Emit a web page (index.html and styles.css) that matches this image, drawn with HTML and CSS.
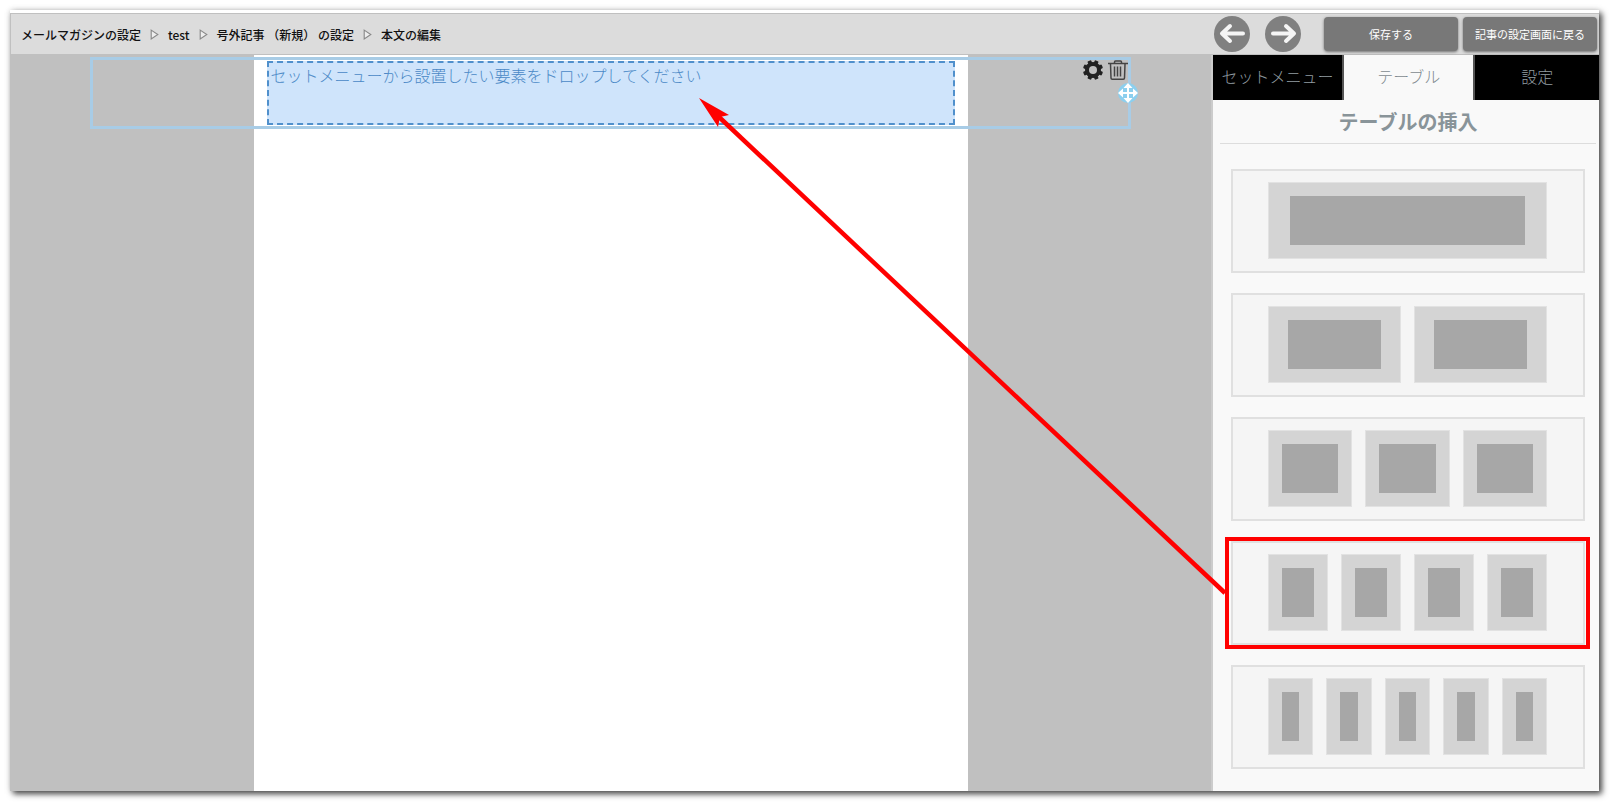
FILE: index.html
```html
<!DOCTYPE html>
<html lang="ja">
<head>
    <meta charset="UTF-8">
    <meta name="viewport" content="width=device-width, initial-scale=1.0">
    <title>本文の編集</title>
    <link rel="stylesheet" href="styles.css">
</head>
<body>

    <div class="app">

        <!-- Toolbar -->
        <header class="toolbar">
            <nav class="breadcrumb">
                <a href="#">メールマガジンの設定</a>
                <svg class="separator" viewBox="0 0 8 10"><path d="M1 1 L7 5 L1 9 Z"/></svg>
                <a href="#">test</a>
                <svg class="separator" viewBox="0 0 8 10"><path d="M1 1 L7 5 L1 9 Z"/></svg>
                <a href="#">号外記事 （新規） の設定</a>
                <svg class="separator" viewBox="0 0 8 10"><path d="M1 1 L7 5 L1 9 Z"/></svg>
                <span>本文の編集</span>
            </nav>
            <div class="history">
                <button class="round-button" aria-label="元に戻す">
                    <svg viewBox="0 0 36 36"><path d="M29 17.500H8M16 10L8 17.500L16 25"/></svg>
                </button>
                <button class="round-button" aria-label="やり直す">
                    <svg viewBox="0 0 36 36"><path d="M8 17.500H29M21 10L29 17.500L21 25"/></svg>
                </button>
            </div>
            <div class="actions">
                <button class="action-button">保存する</button>
                <button class="action-button">記事の設定画面に戻る</button>
            </div>
        </header>

        <div class="main">
            <!-- Editing area -->
            <main class="workspace">
                <div class="page"></div>
                <div class="block">
                    <div class="dropzone">セットメニューから設置したい要素をドロップしてください</div>
                    <div class="block-tools">
                        <button class="tool-button" aria-label="要素の設定">
                            <svg viewBox="0 0 20 20">
                                <g fill="#222">
                                    <rect x="8" y="0" width="4" height="20" rx="1" transform="rotate(22.500 10 10)"/>
                                    <rect x="8" y="0" width="4" height="20" rx="1" transform="rotate(67.500 10 10)"/>
                                    <rect x="8" y="0" width="4" height="20" rx="1" transform="rotate(112.500 10 10)"/>
                                    <rect x="8" y="0" width="4" height="20" rx="1" transform="rotate(157.500 10 10)"/>
                                    <circle cx="10" cy="10" r="8"/>
                                </g>
                                <circle cx="10" cy="10" r="4" fill="#c0c0c0"/>
                            </svg>
                        </button>
                        <button class="tool-button" aria-label="削除">
                            <svg viewBox="0 0 20 20" fill="none" stroke="#444">
                                <path d="M0 3.500H20" stroke-width="1.500"/>
                                <path d="M6.500 3V2Q6.500 1 7.500 1H12.500Q13.500 1 13.500 2V3" stroke-width="1.500"/>
                                <path d="M2.500 4L3 18Q3 19.200 4.200 19.200H15.300Q16.500 19.200 16.500 18L17 4" stroke-width="1.500"/>
                                <path d="M6.500 6.500V16.500M9.500 6.500V16.500M12.500 6.500V16.500" stroke-width="1.500"/>
                            </svg>
                        </button>
                    </div>
                    <button class="move-handle" aria-label="移動">
                        <svg viewBox="0 0 20 20">
                            <circle cx="10" cy="10" r="10" fill="#8ccfee"/>
                            <path d="M10 3V17M3 10H17" stroke="#fff" stroke-width="2"/>
                            <path d="M10 0L14.500 5H5.500ZM10 20L14.500 15H5.500ZM0 10L5 5.500V14.500ZM20 10L15 5.500V14.500Z" fill="#fff"/>
                        </svg>
                    </button>
                </div>
            </main>

            <!-- Side panel -->
            <aside class="sidebar">
                <div class="tabs">
                    <button class="tab">セットメニュー</button>
                    <button class="tab active">テーブル</button>
                    <button class="tab">設定</button>
                </div>
                <h2>テーブルの挿入</h2>
                <div class="layouts">
                    <button class="layout one" aria-label="1列">
                        <span class="cell"></span>
                    </button>
                    <button class="layout two" aria-label="2列">
                        <span class="cell"></span><span class="cell"></span>
                    </button>
                    <button class="layout" aria-label="3列">
                        <span class="cell"></span><span class="cell"></span><span class="cell"></span>
                    </button>
                    <button class="layout marked" aria-label="4列">
                        <span class="cell"></span><span class="cell"></span><span class="cell"></span><span class="cell"></span>
                    </button>
                    <button class="layout" aria-label="5列">
                        <span class="cell"></span><span class="cell"></span><span class="cell"></span><span class="cell"></span><span class="cell"></span>
                    </button>
                </div>
            </aside>
        </div>

        <!-- Arrow from the marked layout to the drop area -->
        <svg class="arrow" viewBox="0 0 528 498">
            <path d="M20 19L526 495" stroke="#f00" stroke-width="4.500"/>
            <path d="M0 0L30 17L21 19L19 29Z" fill="#f00"/>
        </svg>
    </div>

</body>
</html>
```

FILE: styles.css
```css
* {
    box-sizing: border-box;
}

body {
    margin: 0;
    padding: 10px 11px 11px 10px;
    background-color: white;
    font-family: "Noto Sans CJK JP", sans-serif;
    min-height: 100vh;
    display: flex;
}

button {
    font-family: inherit;
    padding: 0;
    border: none;
    cursor: pointer;
}

svg {
    display: block;
}

.app {
    flex: 1;
    display: flex;
    flex-direction: column;
    position: relative;
    padding-top: 3px;
    background-color: white;
    box-shadow: 3px 3px 6px rgba(0, 0, 0, 0.7), 0 0 6px rgba(0, 0, 0, 0.15);
}

/* Toolbar */
.toolbar {
    display: flex;
    align-items: center;
    height: 42px;
    padding: 0 2px 0 10px;
    background-color: #dcdcdc;
    border: 1px solid #c0c0c0;
    border-right: none;
}

.breadcrumb {
    flex: 1;
    display: flex;
    align-items: center;
    gap: 9px;
    font-size: 12px;
    font-weight: 500;
    color: #111;
}

.breadcrumb a {
    color: inherit;
    text-decoration: none;
}

.separator {
    width: 9px;
    height: 11px;
    fill: #eee;
    stroke: #888;
}

.history {
    display: flex;
    gap: 15px;
    margin-right: 23px;
}

.round-button {
    width: 36px;
    height: 36px;
    border-radius: 50%;
    background-color: #808080;
}

.round-button path {
    fill: none;
    stroke: #f5f5f5;
    stroke-width: 4;
    stroke-linecap: round;
    stroke-linejoin: round;
}

.actions {
    display: flex;
    gap: 5px;
}

.action-button {
    width: 134px;
    height: 34px;
    border-radius: 4px;
    background-color: #787878;
    box-shadow: 0 1px 3px rgba(0, 0, 0, 0.5);
    color: white;
    font-size: 11px;
}

.main {
    flex: 1;
    display: flex;
}

/* Editing area */
.workspace {
    flex: 1;
    display: grid;
    justify-items: center;
    background-color: #c0c0c0;
}

.page {
    grid-area: 1 / 1;
    width: 100%;
    max-width: 714px;
    background-color: white;
}

.block {
    grid-area: 1 / 1;
    align-self: start;
    position: relative;
    width: 100%;
    max-width: 1041px;
    margin-top: 2px;
    padding: 1px;
    border: 3px solid #a8cce6;
}

.dropzone {
    max-width: 688px;
    height: 64px;
    margin: 0 auto;
    padding: 0 2px;
    border: 2px dashed #5090cc;
    background-color: #cfe4fb;
    color: #4a88c6;
    font-size: 16px;
    font-weight: 300;
    line-height: 24px;
}

.block-tools {
    position: absolute;
    top: 0;
    right: 0;
    display: flex;
    gap: 5px;
}

.tool-button {
    width: 20px;
    height: 20px;
    background: none;
}

.move-handle {
    position: absolute;
    top: 23px;
    right: -10px;
    width: 20px;
    height: 20px;
    background: none;
}

/* Side panel */
.sidebar {
    width: 388px;
    border-left: 2px solid #ccc;
    background-color: #f9f9f9;
}

.tabs {
    display: flex;
    height: 45px;
}

.tab {
    width: 34%;
    padding-bottom: 4px;
    background-color: black;
    border-right: 2px solid #555;
    color: #929da2;
    font-size: 16px;
    font-weight: 300;
}

.tab:last-child {
    flex: 1;
    border-right: none;
}

.tab.active {
    background-color: #f9f9f9;
    color: #7f8a8f;
}

h2 {
    margin: 0 3px 0 7px;
    border-bottom: 1px solid #ddd;
    color: #899499;
    font-size: 20px;
    line-height: 43px;
    text-align: center;
}

.layouts {
    display: flex;
    flex-direction: column;
    gap: 20px;
    padding: 25px 14px 22px 18px;
}

.layout {
    position: relative;
    display: flex;
    gap: 13px;
    height: 104px;
    padding: 11px 36px 12px 35px;
    background-color: #f5f5f5;
    border: 2px solid #e0e0e0;
}

.cell {
    flex: 1;
    height: 77px;
    padding: 13px;
    border: 1px solid #e2e2e2;
    background-color: #a7a7a7;
    background-clip: content-box;
    box-shadow: inset 0 0 0 13px #d4d4d4;
}

.one .cell {
    padding: 13px 21px;
    box-shadow: inset 0 13px #d4d4d4, inset 0 -13px #d4d4d4, inset 21px 0 #d4d4d4, inset -21px 0 #d4d4d4;
}

.two .cell {
    padding: 13px 19px;
    box-shadow: inset 0 13px #d4d4d4, inset 0 -13px #d4d4d4, inset 19px 0 #d4d4d4, inset -19px 0 #d4d4d4;
}

.marked::after {
    content: "";
    position: absolute;
    inset: -6px -7px -6px -8px;
    border: 4px solid red;
}

.arrow {
    position: absolute;
    top: 88px;
    right: 372px;
    width: 528px;
    height: 498px;
    pointer-events: none;
}
```
